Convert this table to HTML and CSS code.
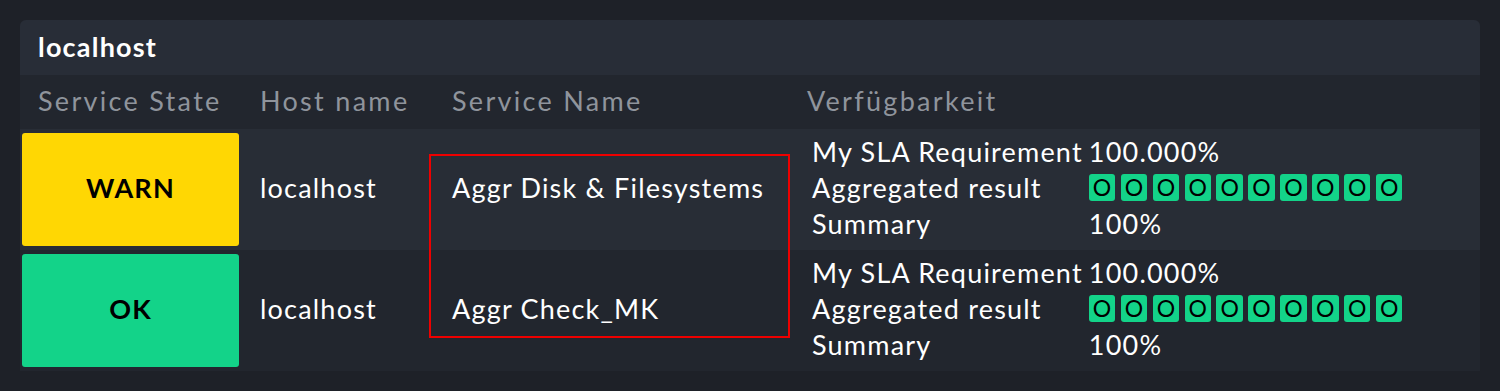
FILE: index.html
```html
<!DOCTYPE html>
<html>
<head>
<meta charset="utf-8">
<link rel="stylesheet" href="styles.css">
</head>
<body>
<div class="page">
  <div class="card">
    <div class="card-title">localhost</div>
    <table class="grid">
      <thead>
        <tr>
          <th class="c-state">Service State</th>
          <th class="c-host">Host name</th>
          <th class="c-svc">Service Name</th>
          <th class="c-avail">Verfügbarkeit</th>
        </tr>
      </thead>
      <tbody>
        <tr class="odd">
          <td class="c-state"><div class="state warn">WARN</div></td>
          <td class="c-host">localhost</td>
          <td class="c-svc">Aggr Disk &amp; Filesystems</td>
          <td class="c-avail">
            <div class="avail">
              <span>My SLA Requirement</span><span>100.000%</span>
              <span>Aggregated result</span>
              <span class="boxes"><i>O</i><i>O</i><i>O</i><i>O</i><i>O</i><i>O</i><i>O</i><i>O</i><i>O</i><i>O</i></span>
              <span>Summary</span><span>100%</span>
            </div>
          </td>
        </tr>
        <tr class="even">
          <td class="c-state"><div class="state ok">OK</div></td>
          <td class="c-host">localhost</td>
          <td class="c-svc">Aggr Check_MK</td>
          <td class="c-avail">
            <div class="avail">
              <span>My SLA Requirement</span><span>100.000%</span>
              <span>Aggregated result</span>
              <span class="boxes"><i>O</i><i>O</i><i>O</i><i>O</i><i>O</i><i>O</i><i>O</i><i>O</i><i>O</i><i>O</i></span>
              <span>Summary</span><span>100%</span>
            </div>
          </td>
        </tr>
      </tbody>
    </table>
    <div class="highlight"></div>
  </div>
</div>
</body>
</html>
```
FILE: styles.css
```css
* {
  box-sizing: border-box;
}
html, body {
  margin: 0;
  padding: 0;
  background: #1e2128;
}
body {
  font-family: Lato, "Noto Sans", sans-serif;
  color: #ffffff;
  font-size: 27px;
  letter-spacing: 1.2px;
}
.page {
  padding: 20px;
}
.card {
  position: relative;
  background: #22262e;
  border-radius: 6px 6px 0 0;
  overflow: hidden;
}
.card-title {
  height: 55px;
  line-height: 53px;
  padding: 0 0 2px 18px;
  background: #282d37;
  font-weight: 700;
}
.grid {
  width: 100%;
  border-collapse: collapse;
  table-layout: fixed;
}
.grid th {
  height: 54px;
  padding: 0 0 4px 18px;
  text-align: left;
  font-weight: 400;
  color: #8f949c;
  letter-spacing: 2.3px;
  background: #22262e;
}
.c-state { width: 222px; }
.c-host { width: 192px; }
.c-svc { width: 355px; }
.grid td {
  height: 121px;
  padding: 0 0 4px 18px;
  vertical-align: middle;
  white-space: nowrap;
}
.grid td.c-state {
  padding: 4px 3px 4px 2px;
}
tr.odd td { background: #282d36; }
tr.even td { background: #22262e; }
.state {
  height: 113px;
  padding-bottom: 4px;
  border-radius: 3px;
  display: flex;
  align-items: center;
  justify-content: center;
  color: #000;
  font-weight: 700;
}
.warn { background: #ffd703; }
.ok { background: #13d389; }
.avail {
  display: grid;
  grid-template-columns: auto auto;
  justify-content: start;
  column-gap: 6px;
  padding-left: 5px;
  line-height: 36px;
}
.boxes {
  display: flex;
  align-items: center;
  gap: 5.4px;
}
.boxes i {
  font-style: normal;
  width: 26.5px;
  height: 27px;
  line-height: 27px;
  border-radius: 3px;
  background: #13d389;
  color: #000;
  text-align: center;
  font-size: 23px;
  letter-spacing: 0;
}
.highlight {
  position: absolute;
  left: 409px;
  top: 134px;
  width: 361px;
  height: 184px;
  border: 2px solid #ee0000;
}
```
